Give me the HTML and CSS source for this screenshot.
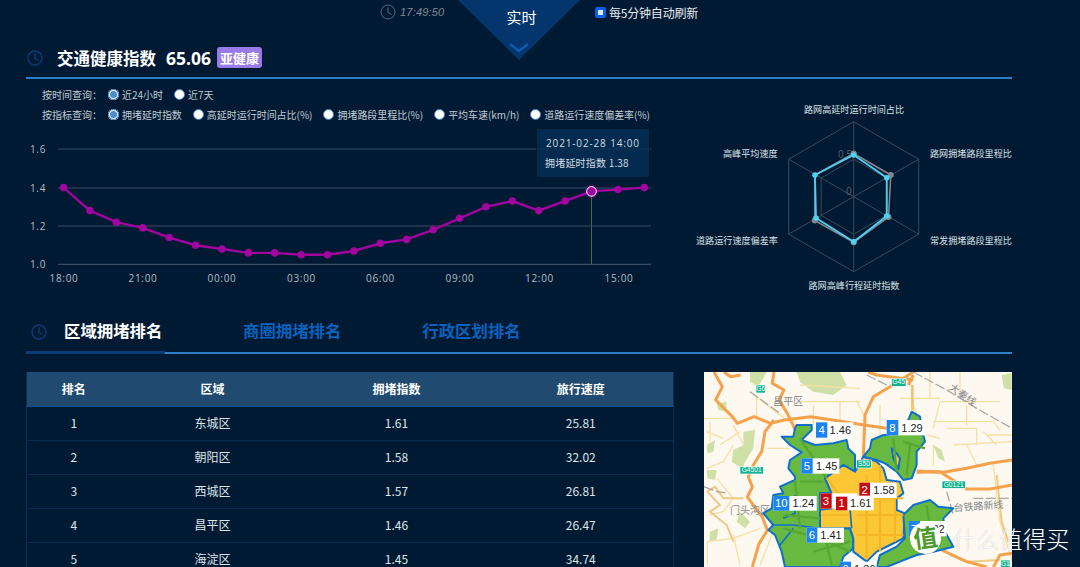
FILE: index.html
```html
<!DOCTYPE html>
<html lang="zh-CN">
<head>
<meta charset="utf-8">
<title>交通健康指数</title>
<link rel="stylesheet" href="styles.css">
</head>
<body>
<div class="page">
  <div class="topbar">
    <svg class="clock-top" viewBox="0 0 16 16"><circle cx="8" cy="8" r="7"/><path d="M8 3.5V8.5L11.5 10.5"/></svg>
    <span class="time">17:49:50</span>
    <label class="refresh"><i class="check"></i>每5分钟自动刷新</label>
  </div>
  <div class="realtime"><span>实时</span><svg class="chevron" viewBox="0 0 20 10"><path d="M1 1L10 8L19 1"/></svg></div>

  <header class="section-head">
    <svg class="clock" viewBox="0 0 16 16"><circle cx="8" cy="8" r="7"/><path d="M8 3.5V8.5L11.5 10.5"/></svg>
    <h1 class="title">交通健康指数</h1>
    <span class="score">65.06</span>
    <span class="badge">亚健康</span>
  </header>

  <div class="filters">
    <div class="filter-row">
      <span class="filter-label">按时间查询：</span>
      <span class="opt"><i class="radio on"></i>近24小时</span>
      <span class="opt"><i class="radio"></i>近7天</span>
    </div>
    <div class="filter-row">
      <span class="filter-label">按指标查询：</span>
      <span class="opt"><i class="radio on"></i>拥堵延时指数</span>
      <span class="opt"><i class="radio"></i>高延时运行时间占比(%)</span>
      <span class="opt"><i class="radio"></i>拥堵路段里程比(%)</span>
      <span class="opt"><i class="radio"></i>平均车速(km/h)</span>
      <span class="opt"><i class="radio"></i>道路运行速度偏差率(%)</span>
    </div>
  </div>

  <div class="charts">
    <div class="line-chart">
      <svg class="line-svg" viewBox="26 128 626 165" width="626" height="165">
        <g class="grid">
          <path d="M58 149H651M58 188H651M58 226H651M58 264.4H651"/>
        </g>
        <path class="cursor" d="M591.5 192V264"/>
        <g class="axis">
          <text x="38" y="152.5">1.6</text><text x="38" y="191.5">1.4</text><text x="38" y="229.5">1.2</text><text x="38" y="268">1.0</text>
          <text x="64" y="282">18:00</text><text x="143" y="282">21:00</text><text x="222" y="282">00:00</text><text x="301.500" y="282">03:00</text><text x="380.500" y="282">06:00</text><text x="460" y="282">09:00</text><text x="539.500" y="282">12:00</text><text x="619" y="282">15:00</text>
        </g>
        <polyline class="series" points="63.5,187.6 89.9,210.6 116.3,222.2 142.7,227.9 169.1,237.5 195.5,245.2 221.9,249 248.3,252.9 274.7,252.9 301.1,254.8 327.5,254.8 353.9,251 380.3,243.3 406.7,239.4 433.1,229.8 459.5,218.3 485.9,206.8 512.3,201 538.7,210.6 565.1,201 591.5,191.4 617.9,189.5 644.3,187.6"/>
        <g class="dots">
          <circle cx="63.5" cy="187.6" r="3.800"/><circle cx="89.9" cy="210.6" r="3.800"/><circle cx="116.3" cy="222.2" r="3.800"/><circle cx="142.7" cy="227.9" r="3.800"/><circle cx="169.1" cy="237.5" r="3.800"/><circle cx="195.5" cy="245.2" r="3.800"/><circle cx="221.9" cy="249" r="3.800"/><circle cx="248.3" cy="252.9" r="3.800"/><circle cx="274.7" cy="252.9" r="3.800"/><circle cx="301.1" cy="254.8" r="3.800"/><circle cx="327.5" cy="254.8" r="3.800"/><circle cx="353.9" cy="251" r="3.800"/><circle cx="380.3" cy="243.3" r="3.800"/><circle cx="406.7" cy="239.4" r="3.800"/><circle cx="433.1" cy="229.8" r="3.800"/><circle cx="459.5" cy="218.3" r="3.800"/><circle cx="485.9" cy="206.8" r="3.800"/><circle cx="512.3" cy="201" r="3.800"/><circle cx="538.7" cy="210.6" r="3.800"/><circle cx="565.1" cy="201" r="3.800"/><circle cx="617.9" cy="189.5" r="3.800"/><circle cx="644.3" cy="187.6" r="3.800"/>
        </g>
        <circle class="dot-halo" cx="591.5" cy="191.4" r="7"/>
        <circle class="dot-active" cx="591.5" cy="191.4" r="4.800"/>
      </svg>
      <div class="tooltip">
        <div class="tip-date">2021-02-28 14:00</div>
        <div class="tip-value">拥堵延时指数 1.38</div>
      </div>
    </div>

    <svg class="radar" viewBox="690 100 322 195" width="322" height="195">
      <g class="radar-grid">
        <path d="M853.7 121.7L918.7 159.2V234.2L853.7 271.7L788.700 234.2V159.2Z"/>
        <path d="M853.7 159.2L886.2 177.95V215.45L853.7 234.2L821.2 215.45V177.95Z"/>
        <path d="M853.7 196.7V121.7M853.7 196.7L918.7 159.2M853.7 196.7L918.7 234.2M853.7 196.7V271.7M853.7 196.7L788.7 234.2M853.7 196.7L788.7 159.2"/>
      </g>
      <g class="radar-tick"><text x="838" y="157.500">0.5</text><text x="846" y="195">0</text></g>
      <polygon class="radar-grey" points="853.7,153.5 890.800,175 888.500,217 853.700,242.300 814.800,220.500 815,175"/>
      <g class="radar-grey-dots"><circle cx="853.7" cy="153.5" r="3"/><circle cx="890.8" cy="175" r="3"/><circle cx="888.5" cy="217" r="3"/><circle cx="853.7" cy="242.3" r="3"/><circle cx="814.8" cy="220.5" r="3"/></g>
      <polygon class="radar-blue" points="853.7,155 886.800,177.700 886.800,216 853.700,241.700 816,218 815,175"/>
      <g class="radar-blue-dots"><circle cx="853.7" cy="155" r="2.800"/><circle cx="886.8" cy="177.7" r="2.800"/><circle cx="886.8" cy="216" r="2.800"/><circle cx="853.7" cy="241.7" r="2.800"/><circle cx="816" cy="218" r="2.800"/><circle cx="815" cy="175" r="2.800"/></g>
      <g class="radar-labels">
        <text x="854" y="113" text-anchor="middle">路网高延时运行时间占比</text>
        <text x="930" y="157">路网拥堵路段里程比</text>
        <text x="930" y="244">常发拥堵路段里程比</text>
        <text x="854" y="289" text-anchor="middle">路网高峰行程延时指数</text>
        <text x="696" y="244">道路运行速度偏差率</text>
        <text x="723" y="157">高峰平均速度</text>
      </g>
    </svg>
  </div>

  <nav class="tabs">
    <div class="tab-active">
      <svg class="clock" viewBox="0 0 16 16"><circle cx="8" cy="8" r="7"/><path d="M8 3.5V8.5L11.5 10.5"/></svg>
      <span>区域拥堵排名</span>
    </div>
    <a class="tab">商圈拥堵排名</a>
    <a class="tab">行政区划排名</a>
  </nav>

  <div class="bottom">
    <table class="rank">
      <thead><tr><th>排名</th><th>区域</th><th>拥堵指数</th><th>旅行速度</th></tr></thead>
      <tbody>
        <tr><td>1</td><td>东城区</td><td>1.61</td><td>25.81</td></tr>
        <tr><td>2</td><td>朝阳区</td><td>1.58</td><td>32.02</td></tr>
        <tr><td>3</td><td>西城区</td><td>1.57</td><td>26.81</td></tr>
        <tr><td>4</td><td>昌平区</td><td>1.46</td><td>26.47</td></tr>
        <tr><td>5</td><td>海淀区</td><td>1.45</td><td>34.74</td></tr>
      </tbody>
    </table>

    <div class="map">
      <svg viewBox="12 21 924 585" width="308" height="195">
        <rect class="land" x="12" y="21" width="924" height="585"/>
        <g class="park">
          <path d="M290 21H420L440 60L400 90L340 80L300 50Z"/>
          <path d="M150 21L200 21L175 65L150 50Z"/>
          <path d="M50 115L80 110L78 140L55 135Z"/>
          <path d="M130 200L165 195L160 250L125 310L95 290L100 255L130 240Z"/>
          <path d="M20 240L45 225L40 260L22 265Z"/>
          <path d="M20 315H50L45 345L22 340Z"/>
          <path d="M905 30L935 25V75L912 70Z"/>
          <path d="M700 240L725 255L735 290L715 280Z"/>
          <path d="M120 440L150 470L135 490L110 470Z"/>
          <path d="M30 500L55 490L50 525L28 530Z"/>
        </g>
        <g class="minor">
          <path d="M12 160H100M160 90L280 180M170 95V160M300 110H480M340 120V180M470 105L500 170M540 120V210M640 100V150M720 110H900M720 110L700 190M800 120V180M700 170H880L900 195M850 200L890 240M740 190H830V240M680 210L720 220"/>
          <path d="M20 310L70 290L100 240M20 200L70 220M22 530L100 520L180 490M22 530V600M50 340L100 400L70 440L30 450M100 510L120 600M700 300V240M880 300L900 470L940 600M800 240L830 300M640 120L650 145"/>
          <path d="M300 60L480 70M420 110V170M600 100H720M690 21V100M780 21V90M860 210H936M760 240L936 230M200 250H270M100 180L130 240M30 170V230M60 240L120 200M220 500L180 600"/>
        </g>
        <g class="brown">
          <path d="M22 380L60 420L30 440L80 480L100 530M22 380L45 365L70 400L130 400"/>
          <path d="M750 570L800 590L900 585"/>
          <path d="M890 330L905 470L925 530"/>
        </g>
        <g class="rail">
          <path d="M640 21L740 75L830 130L936 190"/>
          <path d="M12 365L50 380L85 385M150 80L240 145M820 400H936M740 380L760 450M500 30L560 60"/>
        </g>
        <g class="road">
          <path d="M42 21L67 65L47 105L97 155L112 175L162 155L212 175L252 165L332 155L432 170L492 180L560 190"/>
          <path d="M222 165L195 200L185 260L160 300L145 335L157 366L142 396L187 456L202 496L177 536L157 606"/>
          <path d="M222 21L217 55L252 75L237 105L262 145L277 175L290 205"/>
          <path d="M72 21L92 35L122 30"/>
          <path d="M640 21L570 65L520 95L495 150L490 275"/>
          <path d="M505 21L530 30L640 45M640 30L625 60"/>
          <path d="M650 322L720 320L800 372L870 372L936 360"/>
          <path d="M650 318L730 322L800 310L870 295L936 285"/>
          <path d="M725 555L800 590L860 606"/>
          <path d="M880 606L900 570L936 565"/>
        </g>
        <path class="road-thin" d="M637 60V135"/>
        <g class="area-labels">
          <text x="265" y="119">昌平区</text>
          <text x="150" y="446">门头沟区</text>
          <text class="skew-a" x="790" y="100">大秦线</text>
          <text class="skew-b" x="835" y="434">台铁路新线</text>
        </g>
        <g class="districts">
          <path class="green" d="M290 180L335 180L335 195L305 225L345 240L400 235L440 225L445 250L465 270L465 320L430 300L375 340L395 385H360V490L450 490L460 520L460 550L430 575L420 606H255L245 560L225 510L205 495L220 480L190 445L215 430L220 390L250 385L240 365L285 345L285 335L265 310L270 285L305 262L270 240L245 215L280 215L285 190Z"/>
          <path class="yellow" d="M375 340L430 300L465 320L490 275L530 290L550 310L560 345L600 350L610 385L590 400L590 435L615 445L610 520L570 540L530 560L500 590L460 560L460 520L450 490H360V385L395 385Z"/>
          <path class="green" d="M490 275L510 250L515 225L550 210L565 210L625 165L635 140L660 155L665 190L675 230L650 260L650 300L635 340L610 345L590 320L555 295L530 285Z"/>
          <path class="yellow" d="M575 250L590 265L600 280L595 312L580 280Z"/>
          <path class="green" d="M610 450L640 420L690 405L715 425L760 430L730 460L735 500L760 545L700 560L650 570L600 590L560 606H530L540 570L590 545L615 520Z"/>
          <path class="inner" d="M250 460L285 445V390M215 480H280L360 490M280 490L240 540M395 385L400 430L360 435M450 430L455 490"/>
        </g>
        <g class="trunk">
          <path d="M300 220L380 340M300 350H370M285 345L300 490M250 490L360 520L450 560M370 490L395 600M340 560L450 530M580 220L590 320M630 240L620 330M610 230L675 250M680 420L700 560M240 420H350M250 450L360 460"/>
        </g>
        <g class="trunk-yellow">
          <path d="M470 400H610M470 450H610M470 510H610M540 300V560M500 330V580M585 360V530M380 340L420 390M365 450H450"/>
        </g>
        <g class="pins">
          <rect class="pin-bg" x="348" y="172" width="112" height="46"/><rect class="pin-blue" x="348" y="172" width="34" height="46"/><text class="pin-n" x="365" y="207">4</text><text class="pin-v" x="421" y="207">1.46</text>
          <rect class="pin-bg" x="560" y="165" width="115" height="46"/><rect class="pin-blue" x="560" y="165" width="35" height="46"/><text class="pin-n" x="577" y="200">8</text><text class="pin-v" x="636" y="200">1.29</text>
          <rect class="pin-bg" x="304" y="280" width="114" height="46"/><rect class="pin-blue" x="304" y="280" width="34" height="46"/><text class="pin-n" x="321" y="315">5</text><text class="pin-v" x="380" y="315">1.45</text>
          <rect class="pin-bg" x="478" y="353" width="112" height="46"/><rect class="pin-redbox" x="478" y="353" width="32" height="46"/><text class="pin-n" x="494" y="388">2</text><text class="pin-v" x="552" y="388">1.58</text>
          <rect class="pin-bg" x="362" y="385" width="110" height="46"/><rect class="pin-redbox" x="362" y="385" width="33" height="46"/><text class="pin-n" x="378" y="420">3</text>
          <rect class="pin-bg" x="408" y="392" width="113" height="44"/><rect class="pin-redbox" x="408" y="395" width="34" height="41"/><text class="pin-n" x="425" y="426">1</text><text class="pin-v" x="482" y="426">1.61</text>
          <rect class="pin-bg" x="220" y="393" width="130" height="44"/><rect class="pin-blue" x="220" y="393" width="48" height="44"/><text class="pin-n" x="244" y="427">10</text><text class="pin-v" x="310" y="427">1.24</text>
          <rect class="pin-bg" x="320" y="488" width="112" height="45"/><rect class="pin-blue" x="320" y="488" width="32" height="45"/><text class="pin-n" x="336" y="523">6</text><text class="pin-v" x="393" y="523">1.41</text>
          <rect class="pin-bg" x="625" y="468" width="115" height="46"/><rect class="pin-blue" x="625" y="468" width="35" height="46"/><text class="pin-n" x="642" y="503">7</text><text class="pin-v" x="702" y="503">1.32</text>
          <rect class="pin-bg" x="420" y="590" width="110" height="46"/><rect class="pin-blue" x="420" y="590" width="33" height="46"/><text class="pin-n" x="437" y="624">9</text><text class="pin-v" x="494" y="624">1.36</text>
        </g>
        <g class="signs">
          <rect x="168" y="60" width="28" height="24"/><text x="182" y="79">G6</text>
          <rect x="574" y="40" width="44" height="24"/><text x="596" y="58">G45</text>
          <rect x="120" y="305" width="70" height="22"/><text x="155" y="322">G4501</text>
          <rect x="726" y="348" width="70" height="22"/><text x="761" y="365">G0121</text>
          <rect x="470" y="285" width="44" height="24"/><text x="492" y="303">S50</text>
          <rect x="902" y="585" width="28" height="24"/><text x="916" y="603">G1</text>
        </g>
      </svg>
    </div>
  </div>

  <div class="watermark">
    <span class="wm-badge">值</span>
    <span class="wm-text">什么值得买</span>
  </div>
</div>
</body>
</html>
```

FILE: styles.css
```css
* { box-sizing: border-box; }
html, body { margin: 0; height: 100%; }
body {
  background: #001a33;
  color: #d5dbe1;
  font-family: "Noto Sans CJK SC", "Liberation Sans", sans-serif;
  overflow: hidden;
}
.page { position: relative; width: 1080px; height: 567px; padding: 0 68px 0 26px; overflow: hidden; }

/* top bar */
.topbar { display: flex; align-items: center; height: 24px; font-size: 12px; }
.clock-top { width: 16px; height: 16px; margin-left: 354px; fill: none; stroke: #57687a; stroke-width: 1; }
.time { margin-left: 4px; width: 195px; font: italic 11px "Liberation Sans", sans-serif; color: #7f8b97; letter-spacing: .2px; }
.refresh { display: flex; align-items: center; gap: 3px; color: #e8ecf0; font-size: 12px; letter-spacing: -.2px; }
.check { display: flex; width: 11px; height: 11px; border-radius: 2px; background: #0a5fe0; border: 3px solid #0a5fe0; }
.check::before { content: ""; flex: 1; background: #dfe9f8; }
.realtime {
  position: absolute; left: 458px; top: 0; width: 122px; height: 60px;
  background: #04356c; clip-path: polygon(0 0, 100% 0, 50% 100%);
  display: flex; flex-direction: column; align-items: center; color: #fff; font-size: 15px; line-height: 22px; padding-top: 6px;
}
.realtime span { margin-left: 5px; }
.chevron { width: 20px; height: 10px; margin-top: 15px; fill: none; stroke: #0d5cb0; stroke-width: 2.4; }

/* section head */
.section-head { display: flex; align-items: center; height: 55px; padding-top: 14px; border-bottom: 2px solid #2d80c7; }
.clock { width: 16px; height: 16px; flex: none; fill: none; stroke: #0a3c78; stroke-width: 1.4; }
.section-head .clock { margin-left: 1px; }
.title { margin: 0 0 0 14px; font-size: 16.5px; font-weight: 700; color: #fff; line-height: 24px; }
.score { margin-left: 10px; font: 700 17.500px "Open Sans", sans-serif; color: #fff; }
.badge { margin-left: 6px; width: 45px; height: 21px; line-height: 21px; text-align: center; background: #9a7ae6; border-radius: 3px; color: #fff; font-size: 13px; font-weight: 700; }

/* filters */
.filters { padding: 5px 0 0 16px; font-size: 10px; color: #c3cbd3; }
.filter-row { display: flex; align-items: center; height: 20px; }
.filter-label { width: 66px; }
.opt { display: flex; align-items: center; gap: 3px; margin-right: 11px; white-space: nowrap; letter-spacing: -.03px; }
.radio { width: 11px; height: 11px; border-radius: 50%; background: #fff; border: 1px solid #3d7fbf; flex: none; }
.radio.on { background: #4a8dcb; border: 0; box-shadow: inset 0 0 0 2px #fff; outline: 1px solid #2f6ca8; outline-offset: -1px; }

/* charts */
.charts { display: flex; justify-content: space-between; margin-top: 4px; height: 195px; }
.line-chart { position: relative; width: 626px; height: 165px; }
.line-svg { display: block; }
.grid path { stroke: #3a4d61; stroke-width: 1.2; fill: none; }
.cursor { stroke: #3f6b4a; stroke-width: 1; }
.axis text { fill: #b4bdc6; font: 10px "Open Sans", sans-serif; letter-spacing: .7px; text-anchor: middle; }
.series { fill: none; stroke: #a0059e; stroke-width: 2.4; }
.dots circle { fill: #a0059e; }
.dot-halo { fill: #a0059e; fill-opacity: .35; }
.dot-active { fill: #a0059e; stroke: #fff; stroke-width: 1; }
.tooltip {
  position: absolute; left: 510px; top: 0; width: 114px; height: 50px;
  background: rgba(2, 48, 86, .82); border: 1px solid #03182c; color: #d5dbe1; font-size: 10px;
  padding: 6px 0 0 8px;
}
.tooltip::after { content: ""; position: absolute; left: 50px; bottom: -5px; border: 5px solid transparent; border-bottom: 0; border-top-color: #03182c; }
.tip-date { font: 10px "Open Sans", sans-serif; letter-spacing: .85px; line-height: 17px; padding-left: 1px; }
.tip-value { margin-top: 2px; line-height: 17px; letter-spacing: .2px; }

.radar { display: block; margin-top: -28px; }
.radar-grid path { fill: none; stroke: #3b4a5a; stroke-width: 1; }
.radar-tick text { fill: #56636f; font: 10px "Open Sans", sans-serif; }
.radar-grey { fill: none; stroke: #7f878e; stroke-width: 1.6; }
.radar-grey-dots circle { fill: #7f878e; }
.radar-blue { fill: none; stroke: #4fd0f0; stroke-width: 1.8; }
.radar-blue-dots circle { fill: #4fd0f0; }
.radar-labels text { fill: #dbe1e6; font-size: 9.1px; }

/* tabs */
.tabs { display: flex; align-items: flex-start; height: 34px; margin-top: -3px; border-bottom: 2px solid #2d80c7; }
.tab-active { display: flex; align-items: flex-start; width: 139px; height: 34px; padding: 0 0 0 5px; gap: 17px; border-bottom: 3px solid #0a3c78; margin-bottom: -2px; color: #fff; font-size: 16.4px; font-weight: 700; white-space: nowrap; }
.tab-active .clock { margin-top: 4px; }
.tab-active span { line-height: 21px; }
.tab { margin-left: 78px; margin-right: 3px; color: #0a62bd; font-size: 16.4px; font-weight: 700; line-height: 21px; white-space: nowrap; }

/* bottom */
.bottom { display: flex; justify-content: space-between; margin-top: 18px; }
.rank { width: 648px; height: 204px; border-collapse: collapse; table-layout: fixed; font-size: 12px; color: #dfe4e9; border-left: 1px solid #0a2c50; border-right: 1px solid #0a2c50; flex: none; }
.rank th { height: 34px; padding: 0; background: #214a70; border-bottom: 1px solid #0c4f93; font-weight: 700; color: #fff; }
.rank th:nth-child(1) { width: 94px; }
.rank th:nth-child(2), .rank th:nth-child(3) { width: 184px; }
.rank td { height: 34px; text-align: center; border-bottom: 1px solid #0a2c50; padding: 0 0 1px; }
.map { width: 308px; height: 195px; flex: none; overflow: hidden; }
.map svg { display: block; }
.land { fill: #fdf9f0; }
.park path { fill: #cfe0a6; }
.minor path { fill: none; stroke: #f8dfa4; stroke-width: 4; }
.brown path { fill: none; stroke: #eec985; stroke-width: 6; }
.rail path { fill: none; stroke: #a9a9a3; stroke-width: 4; stroke-dasharray: 30 8; }
.road path { fill: none; stroke: #f6a24c; stroke-width: 9; stroke-linejoin: round; }
.road-thin { fill: none; stroke: #f2c26f; stroke-width: 8; }
.area-labels text { fill: #84878a; font-size: 30px; text-anchor: middle; }
.skew-a { transform-box: fill-box; transform-origin: center; transform: rotate(35deg); }
.skew-b { transform-box: fill-box; transform-origin: center; transform: rotate(-4deg); }
.green { fill: #67b93f; stroke: #0e6fcf; stroke-width: 6; stroke-linejoin: round; }
.yellow { fill: #fcc734; stroke: #0e6fcf; stroke-width: 6; stroke-linejoin: round; }
.inner { fill: none; stroke: #0e6fcf; stroke-width: 5; }
.trunk path { fill: none; stroke: #58a733; stroke-width: 7; }
.trunk-yellow path { fill: none; stroke: #f2b626; stroke-width: 6; }
.pin-bg { fill: #fff; }
.pin-blue { fill: #1b84f2; }
.pin-redbox { fill: #c40d12; }
.pin-n { fill: #fff; font: 34px "Liberation Sans", sans-serif; text-anchor: middle; }
.pin-v { fill: #222; font: 33px "Liberation Sans", sans-serif; text-anchor: middle; }
.signs rect { fill: #10b28f; stroke: #fff; stroke-width: 2; }
.signs text { fill: #fff; font: 20px "Liberation Sans", sans-serif; text-anchor: middle; }

/* watermark */
.watermark { position: absolute; left: 910px; top: 522px; display: flex; align-items: center; gap: 12px; }
.wm-badge { width: 31px; height: 32px; border-radius: 50%; background: #fff; color: #4d9a2c; font-size: 24px; font-weight: 700; line-height: 30px; text-align: center; transform: rotate(-8deg); }
.wm-text { font-size: 23px; font-weight: 300; color: #fff; line-height: 32px; white-space: nowrap; letter-spacing: .3px; text-shadow: 0 0 1px rgba(120, 120, 120, .6); }
```
